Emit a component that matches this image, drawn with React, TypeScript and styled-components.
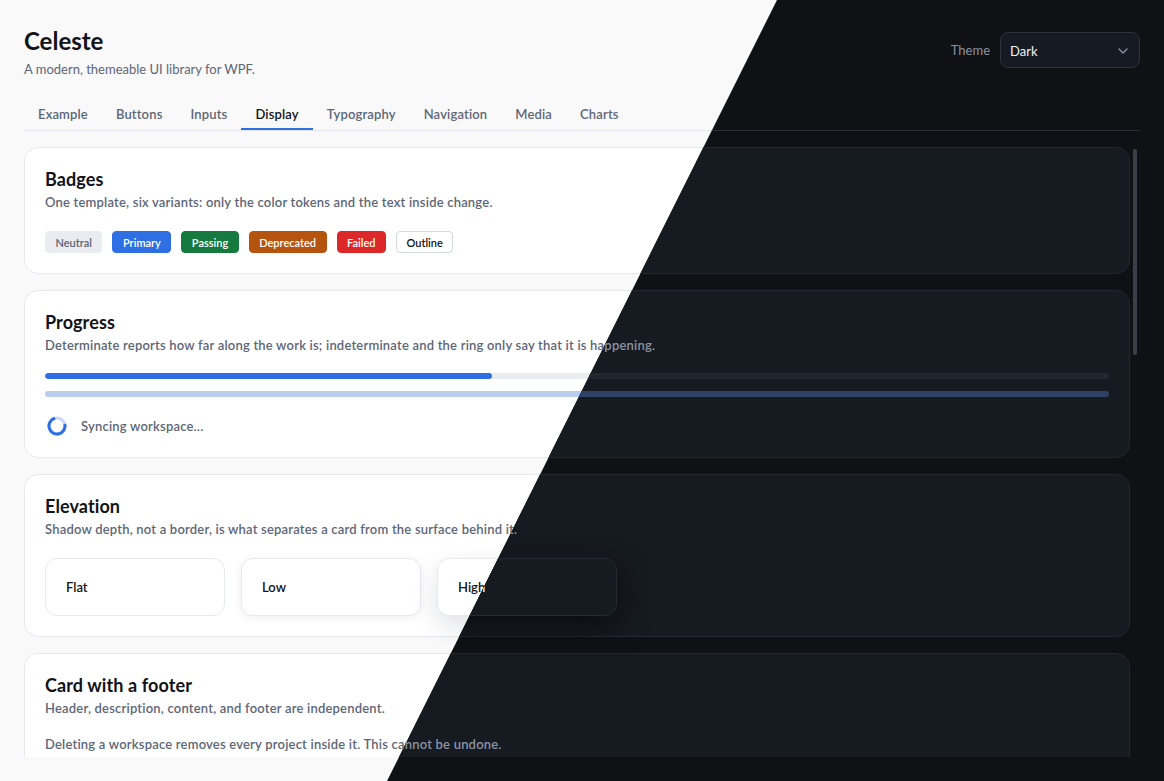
import React from "react";
import styled, { createGlobalStyle, ThemeProvider } from "styled-components";
import { ChevronDown } from "lucide-react";

const light = {
  page: "#f9f9fa",
  card: "#ffffff",
  border: "#e6e8ed",
  text: "#111318",
  muted: "#5d6678",
  line: "#e4e6eb",
  accent: "#2f6fe4",
  track: "#e9ecf1",
  indeterminate: "#b9cdee",
  ringTrack: "#c8d8f6",
  selectBg: "#ffffff",
  selectBorder: "#d9dce3",
  thumb: "#c4c8d0",
  tileBorder: "#e7e9ee",
  lowShadow: "0 2px 8px rgba(17, 24, 39, 0.07)",
  highShadow: "0 10px 26px rgba(17, 24, 39, 0.13)",
  neutralBg: "#e9ecf1",
  neutralFg: "#5b6473",
  outlineBorder: "#d3d7e0",
};

const dark = {
  ...light,
  page: "#0f1115",
  card: "#161a21",
  border: "#242831",
  text: "#f1f3f6",
  muted: "#8b93a3",
  line: "#2a2e37",
  track: "#22262e",
  indeterminate: "#2f4066",
  ringTrack: "#2f4066",
  selectBg: "#161a22",
  selectBorder: "#2e323c",
  thumb: "#3a3f4a",
  tileBorder: "#262a33",
  lowShadow: "0 2px 8px rgba(0, 0, 0, 0.35)",
  highShadow: "0 10px 30px rgba(0, 0, 0, 0.55)",
  neutralBg: "#262a33",
  neutralFg: "#b4bac6",
  outlineBorder: "#3a3f4a",
};

type Theme = typeof light;

const GlobalStyle = createGlobalStyle`
  * { box-sizing: border-box; }
  html, body { margin: 0; padding: 0; overflow: hidden; }
  body { font-family: Lato, "Noto Sans", sans-serif; }
`;

const Stage = styled.div`
  position: relative;
  width: 100vw;
  height: 100vh;
  overflow: hidden;
`;

// the dark copy lies over the light one, cut along the diagonal
const DarkLayer = styled.div`
  position: absolute;
  inset: 0;
  clip-path: polygon(777px 0, 100% 0, 100% 100%, 387px 100%);
`;

const Page = styled.div<{ theme: Theme }>`
  height: 100vh;
  padding: 24px;
  display: flex;
  flex-direction: column;
  background: ${({ theme }) => theme.page};
  color: ${({ theme }) => theme.text};
`;

const Header = styled.header`
  display: flex;
  justify-content: space-between;
  align-items: flex-start;
`;

const Title = styled.h1`
  margin: 0;
  font-size: 24px;
  line-height: 34px;
  font-weight: 700;
`;

const Subtitle = styled.p`
  margin: 2px 0 0;
  font-size: 13px;
  line-height: 18px;
  color: ${({ theme }) => theme.muted};
`;

const ThemePicker = styled.div`
  display: flex;
  align-items: center;
  gap: 10px;
  margin-top: 8px;
  font-size: 13px;
  color: ${({ theme }) => theme.muted};
`;

const Select = styled.div`
  width: 140px;
  height: 36px;
  display: flex;
  align-items: center;
  justify-content: space-between;
  padding: 1px 8px 0 9px;
  border: 1px solid ${({ theme }) => theme.selectBorder};
  border-radius: 8px;
  background: ${({ theme }) => theme.selectBg};
  color: ${({ theme }) => theme.text};
  font-size: 13px;

  & svg {
    color: ${({ theme }) => theme.muted};
  }
`;

const TabBar = styled.nav`
  display: flex;
  margin-top: 18px;
  border-bottom: 1px solid ${({ theme }) => theme.line};
`;

const Tab = styled.div<{ $active?: boolean }>`
  padding: 9px 14px 5px;
  font-size: 13px;
  line-height: 18px;
  font-weight: 600;
  letter-spacing: 0.15px;
  color: ${({ theme, $active }) => ($active ? theme.text : theme.muted)};
  border-bottom: 2px solid ${({ theme, $active }) => ($active ? theme.accent : "transparent")};
`;

const ScrollFrame = styled.div`
  flex: 1;
  min-height: 0;
  margin-top: 16px;
  display: flex;
`;

const ScrollContent = styled.div`
  flex: 1;
  min-width: 0;
  overflow: hidden;
`;

const ScrollTrack = styled.div`
  width: 10px;
  padding: 2px 3px;
`;

const ScrollThumb = styled.div`
  height: 206px;
  border-radius: 2px;
  background: ${({ theme }) => theme.thumb};
`;

const Card = styled.section`
  margin-bottom: 16px;
  padding: 20px;
  border: 1px solid ${({ theme }) => theme.border};
  border-radius: 14px;
  background: ${({ theme }) => theme.card};
`;

const CardTitle = styled.h2`
  margin: 0;
  font-size: 18px;
  line-height: 22px;
  font-weight: 700;
  letter-spacing: 0.1px;
`;

const CardText = styled.p<{ $gap?: number }>`
  margin: ${({ $gap }) => $gap ?? 3}px 0 0;
  font-size: 13px;
  line-height: 18px;
  font-weight: 600;
  letter-spacing: 0.2px;
  color: ${({ theme }) => theme.muted};
`;

const CardBody = styled.div`
  margin-top: 20px;
`;

const BadgeRow = styled.div`
  display: flex;
  gap: 10px;
`;

const badgeColors: Record<string, [string, string]> = {
  primary: ["#2f6fe4", "#ffffff"],
  passing: ["#16793e", "#ffffff"],
  deprecated: ["#b5530f", "#ffffff"],
  failed: ["#dc2828", "#ffffff"],
};

const Badge = styled.span<{ $kind: string }>`
  height: 22px;
  padding: 0 9.5px;
  display: inline-flex;
  align-items: center;
  border-radius: 4px;
  font-size: 11px;
  font-weight: 600;
  border: 1px solid
    ${({ theme, $kind }) =>
      $kind === "outline" ? theme.outlineBorder : $kind === "neutral" ? theme.neutralBg : badgeColors[$kind][0]};
  background: ${({ theme, $kind }) =>
    $kind === "outline" ? theme.card : $kind === "neutral" ? theme.neutralBg : badgeColors[$kind][0]};
  color: ${({ theme, $kind }) =>
    $kind === "outline" ? theme.text : $kind === "neutral" ? theme.neutralFg : badgeColors[$kind][1]};
`;

const Track = styled.div<{ $soft?: boolean }>`
  height: 6px;
  border-radius: 3px;
  background: ${({ theme, $soft }) => ($soft ? theme.indeterminate : theme.track)};
  overflow: hidden;
`;

const Fill = styled.div`
  height: 100%;
  border-radius: 3px;
  background: ${({ theme }) => theme.accent};
`;

const ProgressStack = styled.div`
  display: flex;
  flex-direction: column;
  gap: 12px;
  margin-top: -1px;
`;

const SpinnerRow = styled.div`
  height: 22px;
  display: flex;
  align-items: center;
  gap: 14px;
  margin-top: 18px;
  padding-left: 2px;
  font-size: 13px;
  font-weight: 600;
  letter-spacing: 0.2px;
  color: ${({ theme }) => theme.muted};
`;

const TileRow = styled.div`
  display: flex;
  gap: 16px;
`;

const Tile = styled.div<{ $level: "flat" | "low" | "high" }>`
  width: 180px;
  height: 58px;
  display: flex;
  align-items: center;
  padding: 0 20px;
  border-radius: 12px;
  border: 1px solid ${({ theme }) => theme.tileBorder};
  background: ${({ theme }) => theme.card};
  font-size: 13px;
  font-weight: 600;
  box-shadow: ${({ theme, $level }) =>
    $level === "high" ? theme.highShadow : $level === "low" ? theme.lowShadow : "none"};
`;

const RingWrap = styled.span`
  display: inline-flex;
  --ring-track: ${({ theme }) => theme.ringTrack};
`;

const Spinner = () => (
  <svg width="20" height="20" viewBox="0 0 20 20">
    <circle cx="10" cy="10" r="8" fill="none" strokeWidth="3" style={{ stroke: "var(--ring-track)" }} />
    <circle
      cx="10"
      cy="10"
      r="8"
      fill="none"
      strokeWidth="3"
      stroke="#2f6fe4"
      strokeDasharray="37.7 50.3"
      transform="rotate(-15 10 10)"
    />
  </svg>
);

const tabs = ["Example", "Buttons", "Inputs", "Display", "Typography", "Navigation", "Media", "Charts"];

const badges: [string, string][] = [
  ["neutral", "Neutral"],
  ["primary", "Primary"],
  ["passing", "Passing"],
  ["deprecated", "Deprecated"],
  ["failed", "Failed"],
  ["outline", "Outline"],
];

function Showcase() {
  return (
    <Page>
      <Header>
        <div>
          <Title>Celeste</Title>
          <Subtitle>A modern, themeable UI library for WPF.</Subtitle>
        </div>
        <ThemePicker>
          Theme
          <Select>
            Dark
            <ChevronDown size={16} strokeWidth={2} />
          </Select>
        </ThemePicker>
      </Header>

      <TabBar>
        {tabs.map((t) => (
          <Tab key={t} $active={t === "Display"}>
            {t}
          </Tab>
        ))}
      </TabBar>

      <ScrollFrame>
        <ScrollContent>
          <Card>
            <CardTitle>Badges</CardTitle>
            <CardText>One template, six variants: only the color tokens and the text inside change.</CardText>
            <CardBody>
              <BadgeRow>
                {badges.map(([k, label]) => (
                  <Badge key={k} $kind={k}>
                    {label}
                  </Badge>
                ))}
              </BadgeRow>
            </CardBody>
          </Card>

          <Card>
            <CardTitle>Progress</CardTitle>
            <CardText>
              Determinate reports how far along the work is; indeterminate and the ring only say that it is happening.
            </CardText>
            <CardBody>
              <ProgressStack>
                <Track>
                  <Fill style={{ width: "42%" }} />
                </Track>
                <Track $soft />
              </ProgressStack>
              <SpinnerRow>
                <RingWrap>
                  <Spinner />
                </RingWrap>
                Syncing workspace...
              </SpinnerRow>
            </CardBody>
          </Card>

          <Card>
            <CardTitle>Elevation</CardTitle>
            <CardText>Shadow depth, not a border, is what separates a card from the surface behind it.</CardText>
            <CardBody>
              <TileRow>
                <Tile $level="flat">Flat</Tile>
                <Tile $level="low">Low</Tile>
                <Tile $level="high">High</Tile>
              </TileRow>
            </CardBody>
          </Card>

          <Card>
            <CardTitle>Card with a footer</CardTitle>
            <CardText>Header, description, content, and footer are independent.</CardText>
            <CardText $gap={18}>Deleting a workspace removes every project inside it. This cannot be undone.</CardText>
          </Card>
        </ScrollContent>
        <ScrollTrack>
          <ScrollThumb />
        </ScrollTrack>
      </ScrollFrame>
    </Page>
  );
}

export default function App() {
  return (
    <>
      <GlobalStyle />
      <Stage>
        <ThemeProvider theme={light}>
          <Showcase />
        </ThemeProvider>
        <DarkLayer>
          <ThemeProvider theme={dark}>
            <Showcase />
          </ThemeProvider>
        </DarkLayer>
      </Stage>
    </>
  );
}
